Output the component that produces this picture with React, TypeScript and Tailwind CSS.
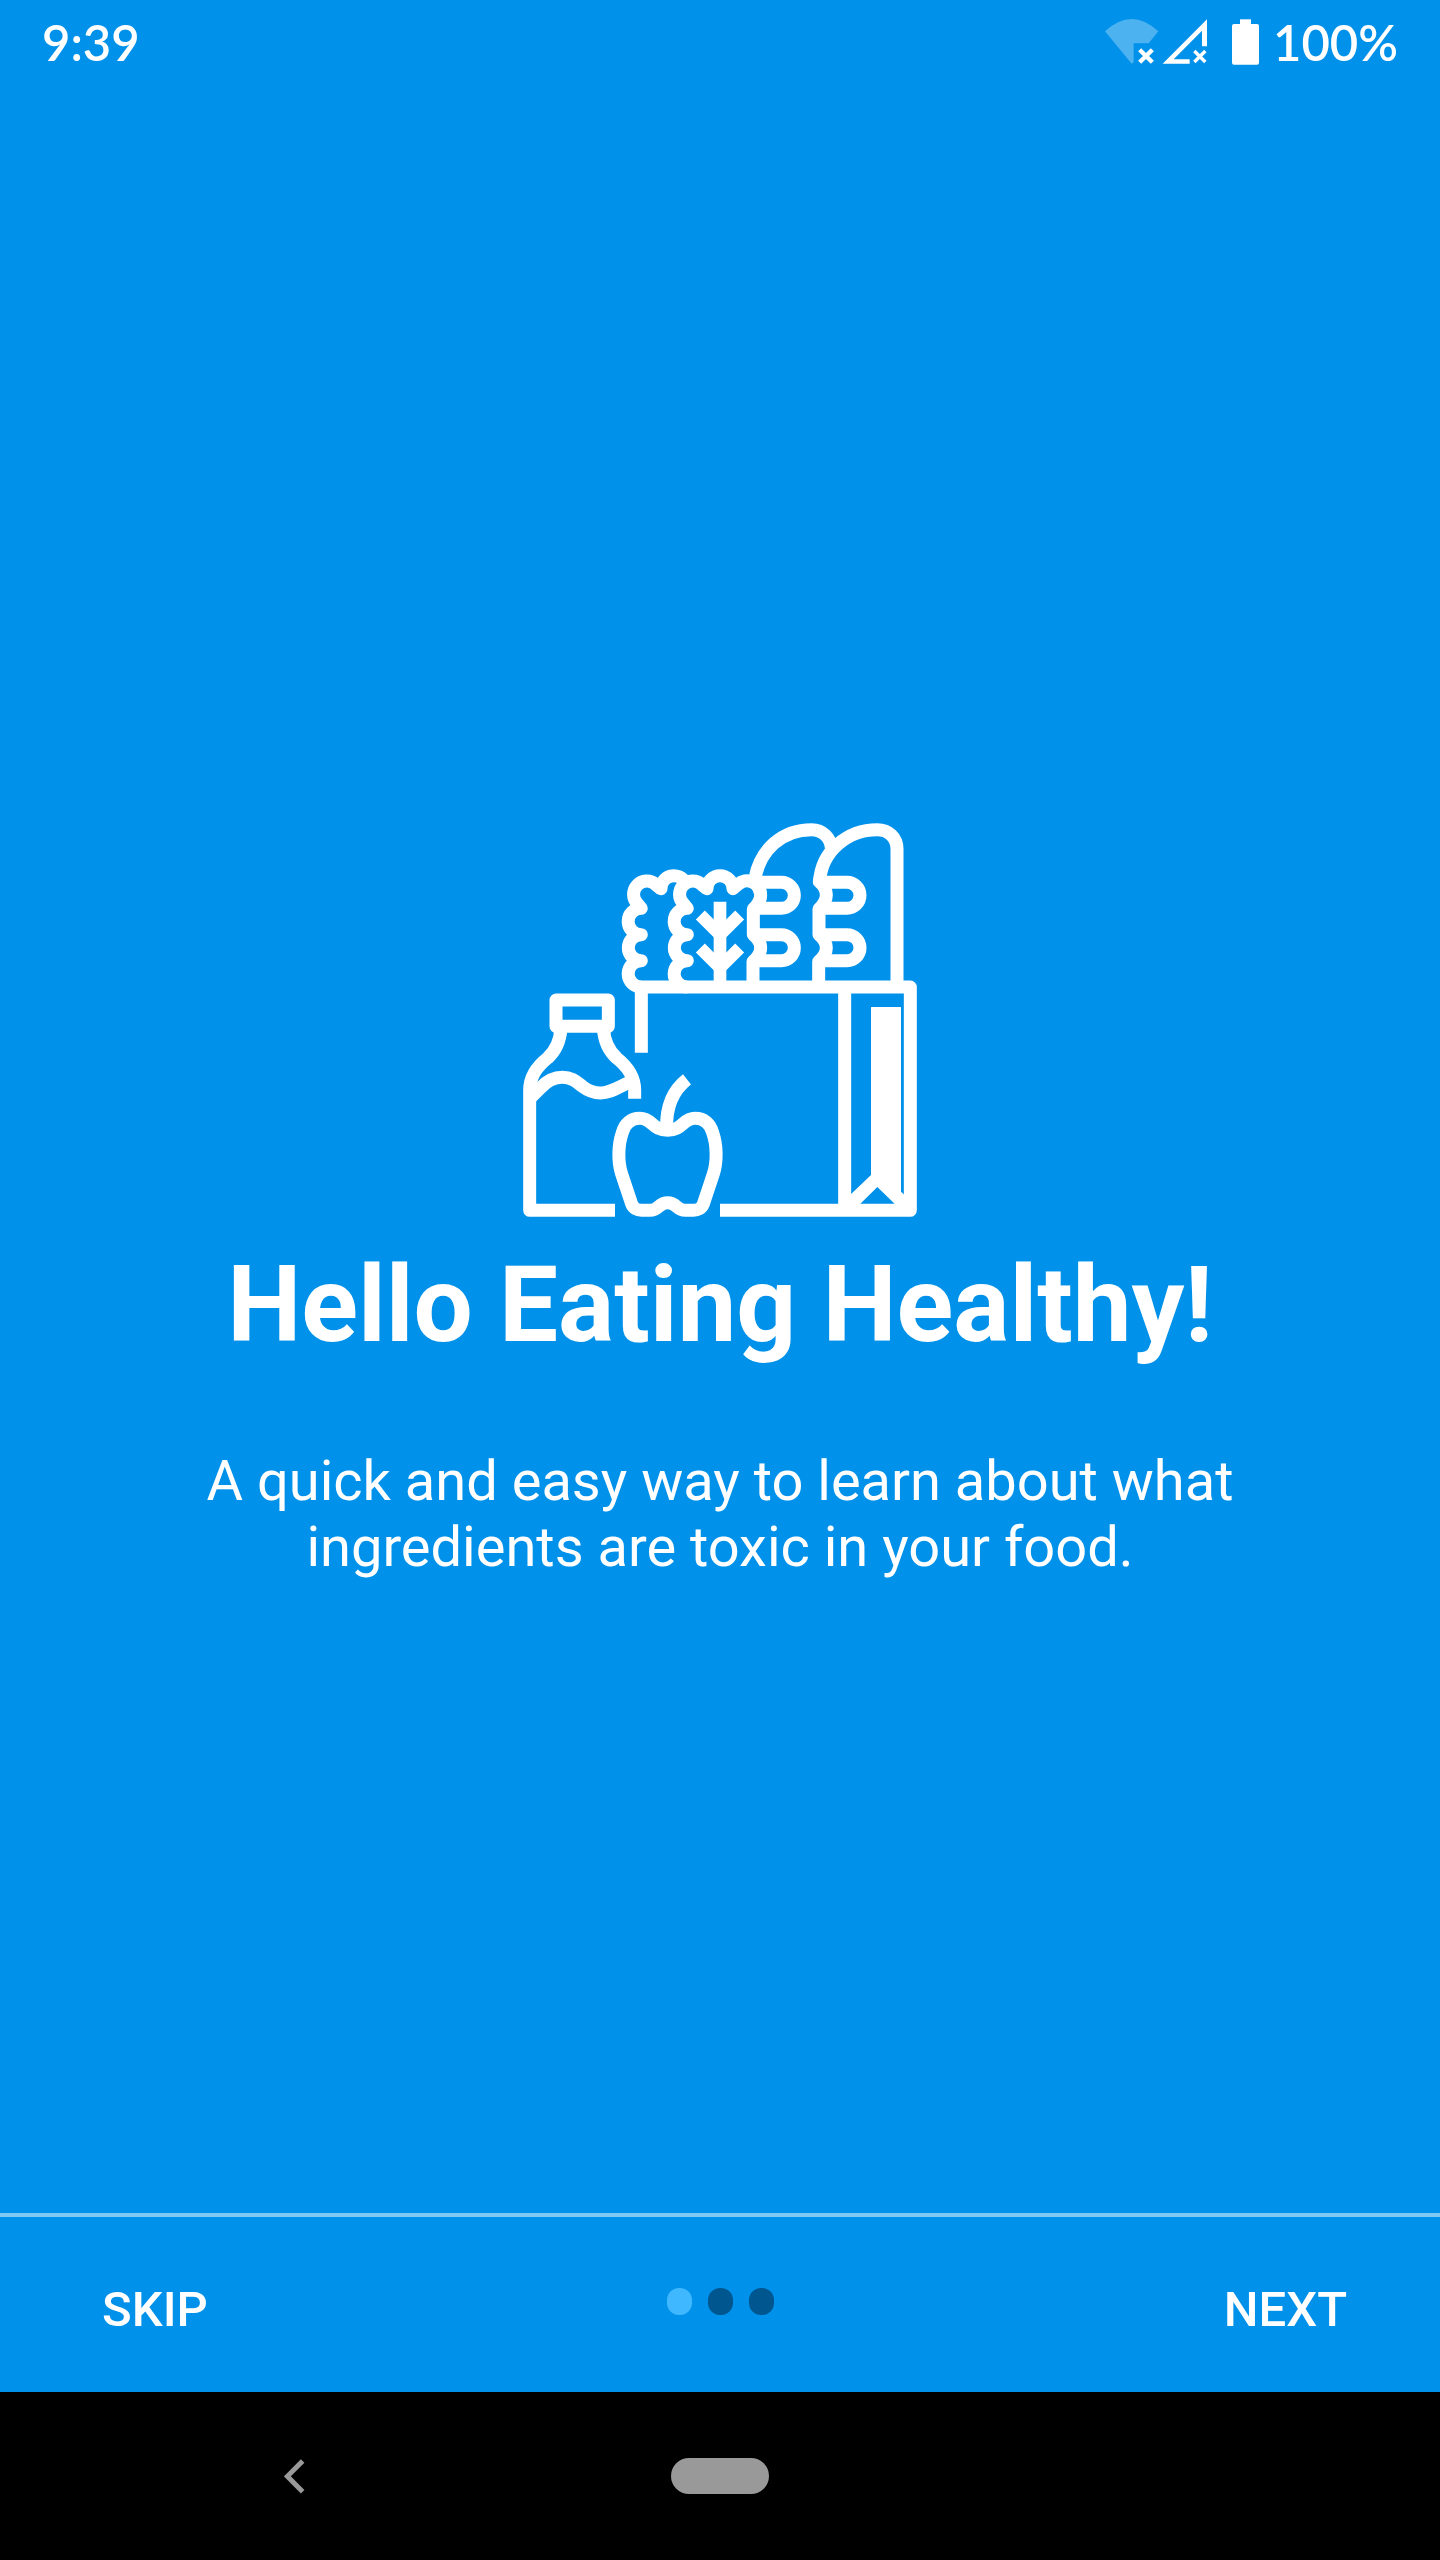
import React from "react";

function WifiOffIcon() {
  return (
    <svg viewBox="75 57 162 138" className="h-[46px] w-[54px]" aria-hidden="true">
      <path d="M75 94 Q155 20 235 94 L206 130 H161 V187 L155 191 Z" fill="#fff" opacity="0.3" />
      <path d="M179 149 L217 187 M217 149 L179 187" stroke="#fff" strokeWidth="13" />
    </svg>
  );
}

function SignalOffIcon() {
  return (
    <svg viewBox="246 57 138 138" className="h-[46px] w-[46px]" aria-hidden="true">
      <path d="M248 191 L381 58 V139 H366 V92 L281 178 H329 V191 Z" fill="#fff" />
      <path d="M343 153 L376 186 M376 153 L343 186" stroke="#fff" strokeWidth="10" />
    </svg>
  );
}

function BatteryIcon() {
  return (
    <svg viewBox="456 57 81 138" className="h-[46px] w-[27px]" aria-hidden="true">
      <rect x="480" y="58" width="33" height="20" fill="#fff" />
      <rect x="456" y="72" width="81" height="122" rx="6" fill="#fff" />
    </svg>
  );
}

/* Scored side of a loaf: the wavy crust edge with its two cuts. */
function LoafSide({ x }: { x: number }) {
  return (
    <g transform={`translate(${x} 0)`}>
      <path d="M2 200 L-1 215 C15 229 20 241 20 255 C20 270 15 281 -2 297 V374 C15 389 20 400 20 413 C20 427 15 439 -3 455 V531" />
      <path d="M14 217 H82 A39 39 0 0 1 82 295 H-2" />
      <path d="M0 374 H82 A39 39 0 0 1 82 452 H-2" />
    </g>
  );
}

/* Scalloped left edge and top corner of a cracker. */
function CrackerSide({ x }: { x: number }) {
  return (
    <path
      transform={`translate(${x} 0)`}
      d="M453 236 L437 223 A40 40 0 0 0 383 282 L394 295 A39 39 0 0 0 394 374 A39 39 0 0 0 394 452 A39 39 0 0 0 394 531"
    />
  );
}

function GroceriesIllustration() {
  return (
    <svg viewBox="39 39 1182 1182" className="size-[394px]" role="img" aria-label="Groceries">
      <g fill="none" stroke="#fff" strokeWidth="39" strokeLinejoin="round">
        {/* milk bottle */}
        <rect x="138" y="570" width="157" height="79" />
        <path d="M315 1201 H59 V840 C59 800 80 770 113 744 C138 722 150 695 153 655" />
        <path d="M280 655 C283 695 295 722 320 744 C353 770 374 800 374 840 V866" />
        <path d="M62 863 L92 833 C112 812 134 802 157 802 C188 802 202 818 218 830 C235 843 252 849 272 849 C300 849 318 835 362 815" />

        {/* bag */}
        <path d="M394 728 V531 H1201 V1201 H630" />
        <path d="M1004 531 V1201" />

        {/* crackers */}
        <CrackerSide x={0} />
        <path d="M437 223 L453 236 A39 39 0 0 1 526 217" />
        <CrackerSide x={138} />
        <path d="M575 223 L591 236 A39 39 0 0 1 669 236 L684 223 A40 40 0 0 1 751 252" />

        {/* loaves */}
        <path d="M735 205 C750 120 815 59 905 59 C938 59 962 84 964 114" />
        <LoafSide x={732} />
        <path d="M1161 531 V117 C1161 82 1135 59 1102 59 C1010 59 935 125 929 213" />
        <LoafSide x={929} />

        {/* apple */}
        <path d="M473 961 C427 961 427 925 390 925 C362 925 344 942 337 968 C324 1005 323 1055 335 1092 L365 1182 C370 1195 382 1201 394 1201 H420 C446 1201 446 1178 473 1178 C500 1178 500 1201 526 1201 H551 C563 1201 575 1195 580 1182 L610 1092 C622 1055 621 1005 608 968 C601 942 583 925 555 925 C518 925 518 961 473 961 Z" />
        <path d="M470 955 C468 890 490 840 531 808" />
      </g>

      {/* wheat ear */}
      <g fill="none" stroke="#fff" strokeWidth="38">
        <path d="M630 275 V531" />
        <path d="M571 315 L630 374 L689 315" />
        <path d="M571 414 L630 473 L689 414" />
      </g>

      {/* side fold of the bag */}
      <path
        d="M1083 591 H1173 V1145 L1184 1155 V1190 H1163 L1102 1131 L1042 1190 H1010 V1165 L1083 1095 Z"
        fill="#fff"
      />
    </svg>
  );
}

export default function App() {
  return (
    <div className="flex min-h-screen flex-col bg-[#0091ea] font-[Roboto,sans-serif] text-white">
      <header className="flex h-[84px] items-center justify-between px-[42px] font-[Lato,sans-serif] text-[49px] leading-none font-semibold">
        <time>9:39</time>
        <div className="flex items-center">
          <WifiOffIcon />
          <span className="ml-[3px] flex">
            <SignalOffIcon />
          </span>
          <span className="mr-[14px] ml-6 flex">
            <BatteryIcon />
          </span>
          <span>100%</span>
        </div>
      </header>

      <main className="flex flex-1 flex-col items-center justify-center px-40 pt-[106px] text-center">
        <GroceriesIllustration />
        <h1 className="mt-[27px] text-[105px] leading-[123px] font-bold">Hello Eating Healthy!</h1>
        <p className="mt-[81px] max-w-[1120px] text-[56px] leading-[66px]">
          A quick and easy way to learn about what ingredients are toxic in your food.
        </p>
      </main>

      <footer className="grid h-[179px] grid-cols-[1fr_auto_1fr] items-center border-t-4 border-[#80c8f4] pb-[6px] text-[49px] leading-[58px] font-medium">
        <button type="button" className="mt-4 ml-[102px] justify-self-start">
          SKIP
        </button>
        <div className="flex gap-4" role="group" aria-label="Step 1 of 3">
          <span className="h-[27px] w-[25px] rounded-xl bg-[#40b8ff]" />
          <span className="h-[27px] w-[25px] rounded-xl bg-[#00568f]" />
          <span className="h-[27px] w-[25px] rounded-xl bg-[#00568f]" />
        </div>
        <button type="button" className="mt-4 mr-[93px] justify-self-end">
          NEXT
        </button>
      </footer>

      <nav className="grid h-[168px] grid-cols-[1fr_auto_1fr] items-center bg-black" aria-label="System">
        <button type="button" aria-label="Back" className="ml-[284px] justify-self-start">
          <svg viewBox="0 0 63 105" className="h-[35px] w-[21px]" aria-hidden="true">
            <path d="M56 6 L10 52 L56 98" fill="none" stroke="#999" strokeWidth="15" />
          </svg>
        </button>
        <button type="button" aria-label="Home" className="h-9 w-[98px] rounded-full bg-[#999]" />
      </nav>
    </div>
  );
}
